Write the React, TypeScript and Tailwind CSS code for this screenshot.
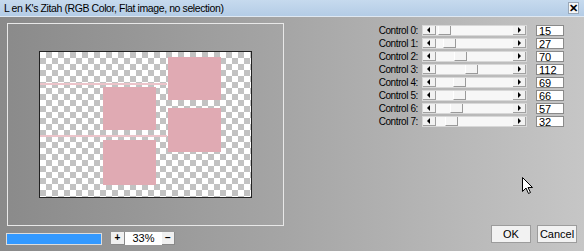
import React from "react";

const CONTROLS = [
  { label: "Control 0:", value: "15", thumb: 16 },
  { label: "Control 1:", value: "27", thumb: 21 },
  { label: "Control 2:", value: "70", thumb: 32 },
  { label: "Control 3:", value: "112", thumb: 43 },
  { label: "Control 4:", value: "69", thumb: 31 },
  { label: "Control 5:", value: "66", thumb: 31 },
  { label: "Control 6:", value: "57", thumb: 28 },
  { label: "Control 7:", value: "32", thumb: 23 },
];

function ArrowBtn({ dir }: { dir: "left" | "right" }) {
  return (
    <div className="w-[13px] h-full bg-[#f2f2f2] border-r border-b border-[#a0a0a0] flex items-center justify-center">
      <svg width="4" height="6" viewBox="0 0 4 6">
        {dir === "left" ? <path d="M0 3L3 0v6z" fill="#000" /> : <path d="M4 3L1 0v6z" fill="#000" />}
      </svg>
    </div>
  );
}

function ScrollRow({ label, value, thumb }: { label: string; value: string; thumb: number }) {
  return (
    <div className="flex items-center h-[13px]">
      <span className="shrink-0 w-[52px] text-right text-[10px] tracking-[-0.4px] text-black leading-none pr-[4px]">{label}</span>
      <div className="shrink-0 w-[105px] h-[11px] flex bg-[#f7f7f7] border border-[#d8d8d8]">
        <ArrowBtn dir="left" />
        <div className="flex-1 relative">
          <div
            className="absolute top-0 h-full w-[13px] bg-[#f4f4f4] border-r border-b border-[#9a9a9a] border-l border-l-white"
            style={{ left: thumb - 14 }}
          />
        </div>
        <ArrowBtn dir="right" />
      </div>
      <div className="shrink-0 ml-[9px] w-[28px] h-[11px] bg-white border border-[#8a8a8a] text-[11px] leading-[10px] pl-[2px] text-black">
        {value}
      </div>
    </div>
  );
}

function Canvas() {
  const pink = "absolute bg-[#e0aab3]";
  return (
    <div
      className="relative w-[213px] h-[147px] border border-[#222] overflow-hidden"
      style={{
        backgroundColor: "#fff",
        backgroundImage:
          "linear-gradient(45deg, #c2c2c2 25%, transparent 25%, transparent 75%, #c2c2c2 75%), linear-gradient(45deg, #c2c2c2 25%, transparent 25%, transparent 75%, #c2c2c2 75%)",
        backgroundSize: "12px 12px",
        backgroundPosition: "0 0, 6px 6px",
      }}
    >
      <div className="absolute left-0 top-[31px] w-[127px] h-[2px] bg-[#ecc4ca]" />
      <div className="absolute left-0 top-[83px] w-[127px] h-[2px] bg-[#ecc4ca]" />
      <div className={`${pink} left-[128px] top-[5px] w-[53px] h-[43px]`} />
      <div className={`${pink} left-[63px] top-[35px] w-[53px] h-[43px]`} />
      <div className={`${pink} left-[128px] top-[56px] w-[53px] h-[44px]`} />
      <div className={`${pink} left-[63px] top-[88px] w-[53px] h-[45px]`} />
    </div>
  );
}

export default function App() {
  return (
    <div className="relative w-[584px] h-[251px] overflow-hidden font-['Liberation_Sans',Arial,sans-serif] bg-gradient-to-r from-[#8a8a8a] via-[#a6a6a6] to-[#c6c6c6]">
      {/* Title bar */}
      <div className="h-[17px] bg-gradient-to-b from-[#c6daee] to-[#b4cce6] border-b border-[#dfe8f2] flex items-center justify-between pl-[4px] pr-[5px]">
        <span className="text-[10.5px] tracking-[-0.4px] text-black leading-none">
          L en K's Zitah (RGB Color, Flat image, no selection)
        </span>
        <div className="w-[11px] h-[12px] bg-[#f4f6f8] border border-[#9aa8b8] flex items-center justify-center text-[11px] font-bold leading-none">
          ✕
        </div>
      </div>

      <div className="flex">
        {/* Left: preview + zoom */}
        <div className="pl-[7px] pt-[6px]">
          <div className="w-[277px] h-[203px] border border-[#e8e8e8] flex items-center justify-center">
            <Canvas />
          </div>
          <div className="flex items-center mt-[6px]">
            <div className="w-[96px] h-[12px] bg-[#3399ff] border border-[#dcdcdc] -ml-[1px]" />
            <div className="ml-[9px] flex items-center h-[13px]">
              <div className="w-[14px] h-full bg-[#f0f0f0] border-r border-b border-[#8a8a8a] flex items-center justify-center text-[10px] font-bold leading-none">+</div>
              <div className="w-[37px] h-full bg-white text-[11px] leading-[13px] text-center text-black">33%</div>
              <div className="w-[13px] h-full bg-[#f0f0f0] border-r border-b border-[#8a8a8a] flex items-center justify-center text-[10px] font-bold leading-none">−</div>
            </div>
          </div>
        </div>

        {/* Right: controls + buttons */}
        <div className="flex-1 flex flex-col pl-[86px] pt-[7px]">
          <div className="flex flex-col">
            {CONTROLS.map((c) => (
              <ScrollRow key={c.label} {...c} />
            ))}
          </div>
          <div className="mt-auto mb-[2px] flex justify-end gap-[6px] pr-[7px]">
            <button className="w-[40px] h-[18px] bg-[#f2f2f2] border border-[#9c9c9c] text-[11px] text-black leading-none">OK</button>
            <button className="w-[40px] h-[18px] bg-[#f2f2f2] border border-[#9c9c9c] text-[11px] text-black leading-none">Cancel</button>
          </div>
        </div>
      </div>

      {/* Mouse cursor */}
      <svg className="absolute left-[522px] top-[177px]" width="11" height="17" viewBox="0 0 11 17">
        <path d="M0.5 0.5V14.5L4 11L6.5 16.5L8.5 15.5L6 10.5H10.5Z" fill="#fff" stroke="#000" strokeWidth="1" />
      </svg>
    </div>
  );
}
